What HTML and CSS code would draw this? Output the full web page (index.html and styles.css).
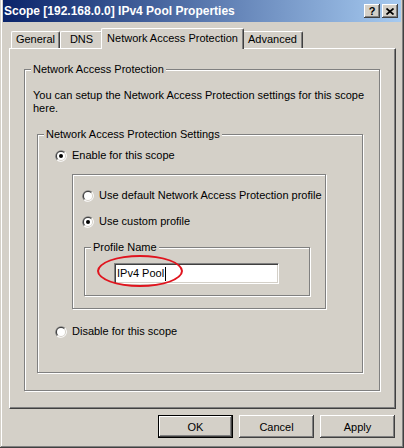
FILE: index.html
```html
<!DOCTYPE html>
<html>
<head>
<meta charset="utf-8">
<link rel="stylesheet" href="styles.css">
</head>
<body>
<div class="window">
  <div class="titlebar">
    <span class="title">Scope [192.168.0.0] IPv4 Pool Properties</span>
    <span class="cap-btn help">?</span>
    <span class="cap-btn close"><svg width="8" height="7" viewBox="0 0 8 7"><path d="M0.5 0.5L7.5 6.5M7.5 0.5L0.5 6.5" stroke="#000" stroke-width="1.7"/></svg></span>
  </div>
  <div class="tabs">
    <div class="tab t-general">General</div>
    <div class="tab t-dns">DNS</div>
    <div class="tab active t-nap">Network Access Protection</div>
    <div class="tab t-adv">Advanced</div>
  </div>
  <div class="panel">
    <div class="group g1">
      <div class="legend">Network Access Protection</div>
      <p class="desc">You can setup the Network Access Protection settings for this scope<br>here.</p>
      <div class="group g2">
        <div class="legend">Network Access Protection Settings</div>
        <div class="radio r-outer r-enable"><svg class="rb" viewBox="0 0 12 12" width="12" height="12"><path d="M1.76 10.24A6 6 0 0 1 10.24 1.76Z" fill="#808080"/><path d="M10.24 1.76A6 6 0 0 1 1.76 10.24Z" fill="#fff"/><path d="M2.46 9.54A5 5 0 0 1 9.54 2.46Z" fill="#404040"/><path d="M9.54 2.46A5 5 0 0 1 2.46 9.54Z" fill="#d4d0c8"/><circle cx="6" cy="6" r="4" fill="#fff"/><circle cx="6" cy="6" r="2" fill="#000"/></svg>Enable for this scope</div>
        <div class="box inner">
          <div class="radio"><svg class="rb" viewBox="0 0 12 12" width="12" height="12"><path d="M1.76 10.24A6 6 0 0 1 10.24 1.76Z" fill="#808080"/><path d="M10.24 1.76A6 6 0 0 1 1.76 10.24Z" fill="#fff"/><path d="M2.46 9.54A5 5 0 0 1 9.54 2.46Z" fill="#404040"/><path d="M9.54 2.46A5 5 0 0 1 2.46 9.54Z" fill="#d4d0c8"/><circle cx="6" cy="6" r="4" fill="#fff"/></svg>Use default Network Access Protection profile</div>
          <div class="radio r-custom"><svg class="rb" viewBox="0 0 12 12" width="12" height="12"><path d="M1.76 10.24A6 6 0 0 1 10.24 1.76Z" fill="#808080"/><path d="M10.24 1.76A6 6 0 0 1 1.76 10.24Z" fill="#fff"/><path d="M2.46 9.54A5 5 0 0 1 9.54 2.46Z" fill="#404040"/><path d="M9.54 2.46A5 5 0 0 1 2.46 9.54Z" fill="#d4d0c8"/><circle cx="6" cy="6" r="4" fill="#fff"/><circle cx="6" cy="6" r="2" fill="#000"/></svg>Use custom profile</div>
          <div class="group g3">
            <div class="legend">Profile Name</div>
            <div class="field-wrap">
              <div class="textbox">IPv4 Pool<span class="caret"></span></div>
              <span class="ellipse"></span>
            </div>
          </div>
        </div>
        <div class="radio r-outer r-disable"><svg class="rb" viewBox="0 0 12 12" width="12" height="12"><path d="M1.76 10.24A6 6 0 0 1 10.24 1.76Z" fill="#808080"/><path d="M10.24 1.76A6 6 0 0 1 1.76 10.24Z" fill="#fff"/><path d="M2.46 9.54A5 5 0 0 1 9.54 2.46Z" fill="#404040"/><path d="M9.54 2.46A5 5 0 0 1 2.46 9.54Z" fill="#d4d0c8"/><circle cx="6" cy="6" r="4" fill="#fff"/></svg>Disable for this scope</div>
      </div>
    </div>
  </div>
  <div class="buttons">
    <div class="btn default">OK</div>
    <div class="btn">Cancel</div>
    <div class="btn">Apply</div>
  </div>
</div>
</body>
</html>
```
FILE: styles.css
```css
html, body {
  margin: 0;
  padding: 0;
  background: #d4d0c8;
}
body {
  font-family: "Liberation Sans", Arial, sans-serif;
  font-size: 11px;
  color: #000;
}
.window {
  width: 404px;
  height: 448px;
  box-sizing: border-box;
  padding: 0 3px 3px 3px;
  background: #d4d0c8;
  box-shadow: inset -1px -1px 0 #404040, inset 1px 0 0 #d4d0c8, inset -2px -2px 0 #808080, inset 2px 0 0 #fff;
  display: flex;
  flex-direction: column;
}
.titlebar {
  height: 22px;
  display: flex;
  align-items: center;
  padding: 0 3px 0 1px;
  background: linear-gradient(to right, #0a246a, #a6caf0);
}
.title {
  color: #fff;
  font-weight: bold;
  font-size: 12px;
  white-space: nowrap;
}
.cap-btn {
  width: 16px;
  height: 14px;
  box-sizing: border-box;
  background: #d4d0c8;
  box-shadow: inset -1px -1px 0 #404040, inset 1px 1px 0 #fff, inset -2px -2px 0 #808080;
  display: flex;
  align-items: center;
  justify-content: center;
}
.help {
  margin-left: auto;
  font-weight: bold;
  font-size: 11px;
  line-height: 14px;
}
.close {
  margin-left: 2px;
}
.tabs {
  height: 26px;
  display: flex;
  align-items: flex-end;
  padding-left: 8px;
}
.tab {
  height: 17px;
  box-sizing: border-box;
  border-left: 1px solid #fff;
  border-top: 1px solid #fff;
  border-right: 1px solid #404040;
  border-radius: 2px 2px 0 0;
  box-shadow: inset -1px 0 0 #808080;
  text-align: center;
  line-height: 15px;
  white-space: nowrap;
  background: #d4d0c8;
}
.t-general { width: 49px; }
.t-dns { width: 43px; }
.t-adv { width: 61px; }
.tab.active {
  width: 143px;
  height: 21px;
  margin: 0 -2px -1px -2px;
  padding-top: 2px;
  position: relative;
  z-index: 1;
}
.panel {
  height: 361px;
  box-sizing: border-box;
  margin: 0 5px 0 6px;
  border-left: 1px solid #fff;
  border-top: 1px solid #fff;
  border-right: 1px solid #404040;
  border-bottom: 1px solid #404040;
  box-shadow: inset -1px -1px 0 #808080;
  padding: 20px 15px 17px 14px;
  display: flex;
  flex-direction: column;
}
.group, .box {
  border: 1px solid #808080;
  box-shadow: inset 1px 1px 0 #fff, 1px 1px 0 #fff;
  display: flex;
  flex-direction: column;
  box-sizing: border-box;
}
.legend {
  align-self: flex-start;
  margin: -7px 0 0 6px;
  padding: 0 2px;
  line-height: 13px;
  background: #d4d0c8;
  white-space: nowrap;
}
.g1 {
  flex: 1;
}
.desc {
  margin: 13px 0 0 8px;
  line-height: 13px;
  white-space: nowrap;
}
.g2 {
  flex: 1;
  margin: 19px 16px 17px 12px;
}
.radio {
  display: flex;
  align-items: center;
  height: 13px;
  line-height: 13px;
  white-space: nowrap;
}
.rb {
  margin-right: 5px;
  flex: none;
}
.r-outer {
  margin-left: 17px;
}
.r-enable {
  margin-top: 8px;
}
.r-disable {
  margin-top: 16px;
}
.inner {
  margin: 12px 0 0 34px;
  width: 254px;
  padding: 14px 0 12px 9px;
}
.r-custom {
  margin-top: 13px;
}
.g3 {
  margin: 19px 0 0 2px;
  width: 226px;
}
.field-wrap {
  position: relative;
  margin: 9px 0 11px 29px;
  width: 165px;
  height: 21px;
}
.textbox {
  width: 165px;
  height: 21px;
  box-sizing: border-box;
  background: #fff;
  border: 1px solid;
  border-color: #808080 #fff #fff #808080;
  box-shadow: inset 1px 1px 0 #404040, inset -1px -1px 0 #d4d0c8;
  padding-left: 2px;
  line-height: 19px;
  white-space: nowrap;
  display: flex;
  align-items: center;
}
.caret {
  display: inline-block;
  width: 1px;
  height: 14px;
  background: #000;
  margin-left: 1px;
}
.ellipse {
  position: absolute;
  left: -17px;
  top: -8px;
  width: 86px;
  height: 32px;
  box-sizing: border-box;
  border: 2px solid #e0141e;
  border-radius: 50%;
}
.buttons {
  display: flex;
  justify-content: flex-end;
  margin: 6px 6px 0 0;
}
.btn {
  width: 75px;
  height: 23px;
  box-sizing: border-box;
  margin-left: 6px;
  background: #d4d0c8;
  box-shadow: inset -1px -1px 0 #404040, inset 1px 1px 0 #fff, inset -2px -2px 0 #808080;
  display: flex;
  align-items: center;
  justify-content: center;
}
.btn.default {
  border: 1px solid #000;
}
```
